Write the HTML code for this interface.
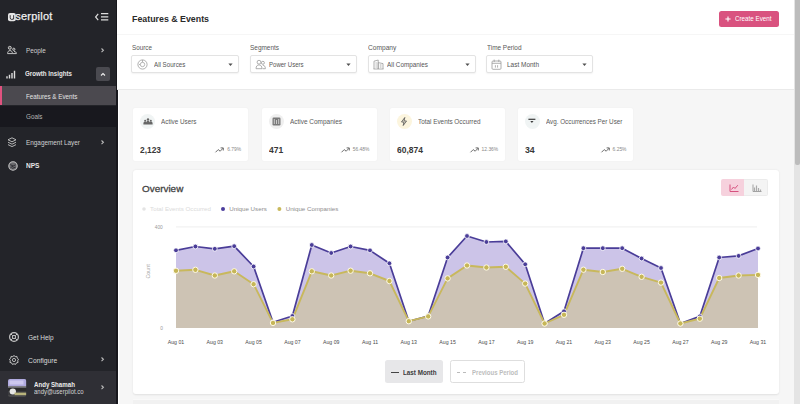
<!DOCTYPE html>
<html><head><meta charset="utf-8">
<style>
*{box-sizing:border-box;margin:0;padding:0}
html,body{width:800px;height:404px;overflow:hidden;background:#f6f6f6;font-family:"Liberation Sans",sans-serif;position:relative}
.a{position:absolute;white-space:nowrap;line-height:1}
svg.a{overflow:visible}
</style></head><body>
<div class="a" style="left:0px;top:0px;width:117px;height:404px;background:#232429;"></div>
<svg class="a" style="left:7.6px;top:12.8px" width="8" height="8.4" viewBox="0 0 8 8.4"><rect x="0" y="0" width="7.8" height="8.3" rx="2" fill="#e6e6e6"/><path d="M2.2 2.2V4.8a1.7 1.7 0 0 0 3.4 0V2.2M5.6 4.5V6.4" stroke="#3a3a40" stroke-width="1" fill="none"/></svg>
<div class="a" id="t1" style="left:15.2px;top:10.59px;font-size:11px;font-weight:400;color:#f0f0f0;letter-spacing:0.25px;-webkit-text-stroke:0.25px #f0f0f0">serpilot</div>
<svg class="a" style="left:94px;top:12px" width="15" height="10" viewBox="0 0 15 10"><path d="M4.2 1.8 L1.6 5 L4.2 8.2" stroke="#ddd" stroke-width="1.2" fill="none"/><path d="M7 1.6h7.3M7 4.8h7.3M7 7.9h7.3" stroke="#ddd" stroke-width="1.3"/></svg>
<svg class="a" style="left:7px;top:45px" width="10" height="10" viewBox="0 0 10 10"><circle cx="2.8" cy="2.8" r="1.5" stroke="#c4c4c4" stroke-width="1" fill="#555"/><circle cx="6.8" cy="4.3" r="1.15" stroke="#c4c4c4" stroke-width="1" fill="#555"/><path d="M0.6 8.6C0.6 6.6 1.5 5.6 3 5.6S5.4 6.6 5.4 8.6ZM5.4 8.6H9.4C9.4 7.2 8.5 6.5 7 6.5" stroke="#c4c4c4" stroke-width="1" fill="none" stroke-linejoin="round"/></svg>
<div class="a" id="t2" style="left:26.1px;top:46.97px;font-size:7px;font-weight:400;color:#d0d0d0;letter-spacing:0px;transform:scaleX(0.9084);transform-origin:0 0;">People</div>
<svg class="a" style="left:100px;top:47.2px" width="5" height="7" viewBox="0 0 5 7"><path d="M1.5 1.5L3.4 3.3L1.5 5.1" stroke="#b8b8b8" stroke-width="1.15" fill="none"/></svg>
<svg class="a" style="left:6px;top:69.5px" width="10" height="9" viewBox="0 0 10 9"><path d="M1 8.5V6.2M3.5 8.5V4.8M6 8.5V3M8.5 8.5V0.8" stroke="#ddd" stroke-width="1.4"/></svg>
<div class="a" id="t3" style="left:24.6px;top:71.26px;font-size:6.9px;font-weight:700;color:#e6e6e6;letter-spacing:0px;transform:scaleX(0.8960);transform-origin:0 0;">Growth Insights</div>
<div class="a" style="left:95.6px;top:67px;width:14px;height:13.8px;background:#4a4a50;border-radius:2px"></div>
<svg class="a" style="left:99.6px;top:71.5px" width="6" height="5" viewBox="0 0 6 5"><path d="M1 3.5L3 1.5L5 3.5" stroke="#eee" stroke-width="1.1" fill="none"/></svg>
<div class="a" style="left:0px;top:86.3px;width:117px;height:19.2px;background:#4b494f;"></div>
<div class="a" style="left:0px;top:86.3px;width:1.8px;height:19.2px;background:#e0527f;"></div>
<div class="a" id="t4" style="left:25.8px;top:93.27px;font-size:7px;font-weight:400;color:#e4e4e4;letter-spacing:0px;transform:scaleX(0.8907);transform-origin:0 0;">Features &amp; Events</div>
<div class="a" style="left:0px;top:105.5px;width:117px;height:21.3px;background:#18181e;"></div>
<div class="a" id="t5" style="left:26px;top:113.17px;font-size:7px;font-weight:400;color:#b4b4b4;letter-spacing:0px;transform:scaleX(0.9018);transform-origin:0 0;">Goals</div>
<svg class="a" style="left:7px;top:137.1px" width="10" height="11" viewBox="0 0 10 11"><path d="M5 0.8L9 2.8L5 4.8L1 2.8Z" stroke="#c4c4c4" stroke-width=".9" fill="none"/><path d="M1 5.2L5 7.2L9 5.2M1 7.6L5 9.6L9 7.6" stroke="#c4c4c4" stroke-width=".9" fill="none"/></svg>
<div class="a" id="t6" style="left:26px;top:138.97px;font-size:7px;font-weight:400;color:#d0d0d0;letter-spacing:0px;transform:scaleX(0.9111);transform-origin:0 0;">Engagement Layer</div>
<svg class="a" style="left:100px;top:139.2px" width="5" height="7" viewBox="0 0 5 7"><path d="M1.5 1.5L3.4 3.3L1.5 5.1" stroke="#b8b8b8" stroke-width="1.15" fill="none"/></svg>
<svg class="a" style="left:7.6px;top:160.6px" width="10" height="10" viewBox="0 0 10 10"><circle cx="5" cy="5" r="4.2" stroke="#c4c4c4" stroke-width="1.1" fill="#6a6a6e"/><path d="M2.2 3.6L5.2 5L2.6 6.6M5.2 5L7.6 3.8M4.2 7.4L7.6 6.2" stroke="#2a2a30" stroke-width="0.9" fill="none"/></svg>
<div class="a" id="t7" style="left:26px;top:162.07px;font-size:7px;font-weight:700;color:#e6e6e6;letter-spacing:0px;transform:scaleX(0.9371);transform-origin:0 0;">NPS</div>
<svg class="a" style="left:8.5px;top:331.8px" width="10" height="10" viewBox="0 0 10 10"><circle cx="5" cy="5" r="4.4" stroke="#c4c4c4" stroke-width="1.2" fill="none"/><circle cx="5" cy="5" r="1.6" stroke="#c4c4c4" stroke-width="1" fill="none"/><path d="M2 2L3.8 3.8M8 2L6.2 3.8M2 8L3.8 6.2M8 8L6.2 6.2" stroke="#c4c4c4" stroke-width="1"/></svg>
<div class="a" id="t8" style="left:27.5px;top:334.17px;font-size:7px;font-weight:400;color:#dadada;letter-spacing:0px;transform:scaleX(0.9267);transform-origin:0 0;">Get Help</div>
<svg class="a" style="left:8.9px;top:354.5px" width="10" height="10" viewBox="0 0 10 10"><path d="M5 0.5L6.2 1.6L7.9 1.4L8.2 3.1L9.5 4.2L8.7 5.7L9.1 7.4L7.4 7.9L6.6 9.4L5 8.8L3.4 9.4L2.6 7.9L0.9 7.4L1.3 5.7L0.5 4.2L1.8 3.1L2.1 1.4L3.8 1.6Z" stroke="#c4c4c4" stroke-width="1" fill="none" stroke-linejoin="round"/><circle cx="5" cy="5" r="1.6" stroke="#c4c4c4" stroke-width=".9" fill="none"/></svg>
<div class="a" id="t9" style="left:27.8px;top:356.77px;font-size:7px;font-weight:400;color:#dadada;letter-spacing:0px;transform:scaleX(0.9651);transform-origin:0 0;">Configure</div>
<svg class="a" style="left:100px;top:356.2px" width="5" height="7" viewBox="0 0 5 7"><path d="M1.5 1.5L3.4 3.3L1.5 5.1" stroke="#b8b8b8" stroke-width="1.15" fill="none"/></svg>
<div class="a" style="left:0px;top:371.2px;width:117px;height:32.8px;background:#2f2f35;"></div>
<svg class="a" style="left:7.9px;top:378.8px" width="18.4" height="17.8" viewBox="0 0 18.4 17.8"><defs><clipPath id="av"><rect width="18.4" height="17.8" rx="2"/></clipPath></defs><g clip-path="url(#av)"><rect width="18.4" height="17.8" fill="#3a3a3e"/><rect width="18.4" height="7.2" fill="#b0aadf"/><rect x="1.5" y="1.5" width="14" height="4" fill="#cdc8ee"/><rect y="7.2" width="18.4" height="1.6" fill="#8a8a90"/><rect y="8.8" width="18.4" height="3" fill="#2a2a2a"/><ellipse cx="4.8" cy="12.6" rx="3.2" ry="3" fill="#e6e6e6"/><rect x="6.5" y="13.6" width="11.9" height="2.8" fill="#b9b47c"/><rect y="16.4" width="18.4" height="1.4" fill="#555"/></g></svg>
<div class="a" id="t10" style="left:33.5px;top:380.97px;font-size:7px;font-weight:700;color:#ececec;letter-spacing:0px;transform:scaleX(0.8760);transform-origin:0 0;">Andy Shamah</div>
<div class="a" id="t11" style="left:33.5px;top:389.03px;font-size:6.7px;font-weight:400;color:#d4d4d4;letter-spacing:0px;transform:scaleX(0.8937);transform-origin:0 0;">andy@userpilot.co</div>
<svg class="a" style="left:99.5px;top:384.2px" width="5" height="7" viewBox="0 0 5 7"><path d="M1.5 1.5L3.4 3.3L1.5 5.1" stroke="#b8b8b8" stroke-width="1.15" fill="none"/></svg>
<div class="a" style="left:116.2px;top:0px;width:1.4px;height:404px;background:#17171c;"></div>
<div class="a" style="left:117.6px;top:90px;width:1.8px;height:314px;background:#fff;"></div>
<div class="a" style="left:117px;top:0px;width:677px;height:34px;background:#fff;"></div>
<div class="a" id="t12" style="left:132.3px;top:14.22px;font-size:9.9px;font-weight:700;color:#2a2a2a;letter-spacing:0px;transform:scaleX(0.8936);transform-origin:0 0;">Features &amp; Events</div>
<div class="a" style="left:719.4px;top:11.2px;width:59.4px;height:15.8px;background:#d9527f;border-radius:2.5px"></div>
<svg class="a" style="left:724.5px;top:16.3px" width="6" height="6" viewBox="0 0 6 6"><path d="M3 0.4V5.6M0.4 3H5.6" stroke="#fff" stroke-width="1.1"/></svg>
<div class="a" id="t13" style="left:735.2px;top:16.29px;font-size:7.1px;font-weight:400;color:#fff;letter-spacing:0px;transform:scaleX(0.8815);transform-origin:0 0;">Create Event</div>
<div class="a" style="left:117px;top:34px;width:677px;height:56px;background:#fff;border-bottom:1px solid #eaeaea"></div>
<div class="a" style="left:117px;top:33.6px;width:677px;height:1.8px;background:#f6f6f6;"></div>
<div class="a" id="t14" style="left:132.3px;top:45.46px;font-size:6.9px;font-weight:400;color:#585858;letter-spacing:0px;transform:scaleX(0.9156);transform-origin:0 0;">Source</div>
<div class="a" id="t15" style="left:250.2px;top:45.46px;font-size:6.9px;font-weight:400;color:#585858;letter-spacing:0px;transform:scaleX(0.9345);transform-origin:0 0;">Segments</div>
<div class="a" id="t16" style="left:368.2px;top:45.46px;font-size:6.9px;font-weight:400;color:#585858;letter-spacing:0px;transform:scaleX(0.9593);transform-origin:0 0;">Company</div>
<div class="a" id="t17" style="left:487.2px;top:45.46px;font-size:6.9px;font-weight:400;color:#585858;letter-spacing:0px;transform:scaleX(0.9352);transform-origin:0 0;">Time Period</div>
<div class="a" style="left:131.2px;top:55.2px;width:107.6px;height:17.6px;background:#fff;border:1px solid #e3e3e3;border-radius:2px;box-shadow:0 1px 1.5px rgba(0,0,0,.05)"></div>
<svg class="a" style="left:227.79999999999998px;top:62.7px" width="5" height="4" viewBox="0 0 5 4"><path d="M0.4 0.5H4.6L2.5 3.1Z" fill="#505050"/></svg>
<div class="a" style="left:249.9px;top:55.2px;width:107.4px;height:17.6px;background:#fff;border:1px solid #e3e3e3;border-radius:2px;box-shadow:0 1px 1.5px rgba(0,0,0,.05)"></div>
<svg class="a" style="left:346.3px;top:62.7px" width="5" height="4" viewBox="0 0 5 4"><path d="M0.4 0.5H4.6L2.5 3.1Z" fill="#505050"/></svg>
<div class="a" style="left:368px;top:55.2px;width:107.6px;height:17.6px;background:#fff;border:1px solid #e3e3e3;border-radius:2px;box-shadow:0 1px 1.5px rgba(0,0,0,.05)"></div>
<svg class="a" style="left:464.6px;top:62.7px" width="5" height="4" viewBox="0 0 5 4"><path d="M0.4 0.5H4.6L2.5 3.1Z" fill="#505050"/></svg>
<div class="a" style="left:486.4px;top:55.2px;width:107.0px;height:17.6px;background:#fff;border:1px solid #e3e3e3;border-radius:2px;box-shadow:0 1px 1.5px rgba(0,0,0,.05)"></div>
<svg class="a" style="left:582.4px;top:62.7px" width="5" height="4" viewBox="0 0 5 4"><path d="M0.4 0.5H4.6L2.5 3.1Z" fill="#505050"/></svg>
<svg class="a" style="left:136.8px;top:58.8px" width="11" height="11" viewBox="0 0 11 11"><circle cx="5.5" cy="5.5" r="4.6" stroke="#9a9a9a" stroke-width=".8" fill="none"/><circle cx="5.5" cy="5.5" r="2.2" stroke="#9a9a9a" stroke-width=".7" fill="none"/><path d="M5.5 1V3.3M2 5.5H3.3" stroke="#9a9a9a" stroke-width=".7"/></svg>
<div class="a" id="t18" style="left:154px;top:60.92px;font-size:7px;font-weight:400;color:#555;letter-spacing:0px;transform:scaleX(0.8840);transform-origin:0 0;">All Sources</div>
<svg class="a" style="left:255px;top:58.6px" width="11" height="11" viewBox="0 0 11 11"><circle cx="4" cy="3.2" r="1.9" stroke="#9a9a9a" stroke-width=".8" fill="none"/><circle cx="7.9" cy="3.8" r="1.5" stroke="#9a9a9a" stroke-width=".8" fill="none"/><path d="M1 9.7c0-2.5 1.3-3.8 3-3.8s3 1.3 3 3.8zM7.6 9.7h2.8c0-2.1-.9-3.4-2.6-3.4" stroke="#9a9a9a" stroke-width=".8" fill="none"/></svg>
<div class="a" id="t19" style="left:269.2px;top:60.92px;font-size:7px;font-weight:400;color:#555;letter-spacing:0px;transform:scaleX(0.8633);transform-origin:0 0;">Power Users</div>
<svg class="a" style="left:372.8px;top:58.8px" width="11" height="11" viewBox="0 0 11 11"><path d="M1 10V2.2L5.2 1V10M5.2 10V3.6L10 4.6V10M0.5 10H10.5M2.5 4H3.8M2.5 6H3.8M2.5 8H3.8M6.8 6H8.5M6.8 8H8.5" stroke="#9a9a9a" stroke-width=".8" fill="none"/></svg>
<div class="a" id="t20" style="left:387.4px;top:60.92px;font-size:7px;font-weight:400;color:#555;letter-spacing:0px;transform:scaleX(0.9061);transform-origin:0 0;">All Companies</div>
<svg class="a" style="left:491.2px;top:58.8px" width="11" height="11" viewBox="0 0 11 11"><rect x="1" y="2" width="9" height="8.3" rx="1" stroke="#9a9a9a" stroke-width=".8" fill="none"/><path d="M1 4.3H10M3.2 0.6V3M7.8 0.6V3M4.4 6.2V8.6M6.6 6.2V8.6" stroke="#9a9a9a" stroke-width=".8"/></svg>
<div class="a" id="t21" style="left:507px;top:60.92px;font-size:7px;font-weight:400;color:#555;letter-spacing:0px;transform:scaleX(0.9238);transform-origin:0 0;">Last Month</div>
<div class="a" style="left:133px;top:108.2px;width:115px;height:53.1px;background:#fff;border-radius:2px;box-shadow:0 0 1.5px rgba(0,0,0,.06)"></div>
<div class="a" style="left:140px;top:114px;width:15px;height:15px;background:#f0f4f4;border-radius:50%"></div>
<div class="a" id="t22" style="left:161px;top:118.71px;font-size:6.6px;font-weight:400;color:#5a5a5a;letter-spacing:0px;transform:scaleX(0.9591);transform-origin:0 0;">Active Users</div>
<div class="a" id="t23" style="left:140.2px;top:145.74px;font-size:8.7px;font-weight:700;color:#383838;letter-spacing:0px;transform:scaleX(0.9655);transform-origin:0 0;">2,123</div>
<svg class="a" style="left:215.1px;top:147px" width="9" height="6" viewBox="0 0 9 6"><path d="M0.5 5.3L3.2 2.6L5.2 4.2L8.2 1.1M5.6 0.9H8.3V3.5" stroke="#666" stroke-width=".95" fill="none"/></svg>
<div class="a" id="t24" style="left:227.2px;top:148.25px;font-size:4.9px;font-weight:400;color:#888;letter-spacing:0px;">6.79%</div>
<div class="a" style="left:262px;top:108.2px;width:115px;height:53.1px;background:#fff;border-radius:2px;box-shadow:0 0 1.5px rgba(0,0,0,.06)"></div>
<div class="a" style="left:269px;top:114px;width:15px;height:15px;background:#efefef;border-radius:50%"></div>
<div class="a" id="t25" style="left:290px;top:118.71px;font-size:6.6px;font-weight:400;color:#5a5a5a;letter-spacing:0px;transform:scaleX(0.9785);transform-origin:0 0;">Active Companies</div>
<div class="a" id="t26" style="left:269.2px;top:145.74px;font-size:8.7px;font-weight:700;color:#383838;letter-spacing:0px;transform:scaleX(0.9793);transform-origin:0 0;">471</div>
<svg class="a" style="left:340.7px;top:147px" width="9" height="6" viewBox="0 0 9 6"><path d="M0.5 5.3L3.2 2.6L5.2 4.2L8.2 1.1M5.6 0.9H8.3V3.5" stroke="#666" stroke-width=".95" fill="none"/></svg>
<div class="a" id="t27" style="left:352.8px;top:148.25px;font-size:4.9px;font-weight:400;color:#888;letter-spacing:0px;">56.48%</div>
<div class="a" style="left:390px;top:108.2px;width:115px;height:53.1px;background:#fff;border-radius:2px;box-shadow:0 0 1.5px rgba(0,0,0,.06)"></div>
<div class="a" style="left:397px;top:114px;width:15px;height:15px;background:#fcf5de;border-radius:50%"></div>
<div class="a" id="t28" style="left:418px;top:118.71px;font-size:6.6px;font-weight:400;color:#5a5a5a;letter-spacing:0px;transform:scaleX(0.9634);transform-origin:0 0;">Total Events Occurred</div>
<div class="a" id="t29" style="left:397.2px;top:145.74px;font-size:8.7px;font-weight:700;color:#383838;letter-spacing:0px;transform:scaleX(0.9745);transform-origin:0 0;">60,874</div>
<svg class="a" style="left:469.5px;top:147px" width="9" height="6" viewBox="0 0 9 6"><path d="M0.5 5.3L3.2 2.6L5.2 4.2L8.2 1.1M5.6 0.9H8.3V3.5" stroke="#666" stroke-width=".95" fill="none"/></svg>
<div class="a" id="t30" style="left:481.6px;top:148.25px;font-size:4.9px;font-weight:400;color:#888;letter-spacing:0px;">12.36%</div>
<div class="a" style="left:518.2px;top:108.2px;width:115px;height:53.1px;background:#fff;border-radius:2px;box-shadow:0 0 1.5px rgba(0,0,0,.06)"></div>
<div class="a" style="left:525.2px;top:114px;width:15px;height:15px;background:#f0f4f4;border-radius:50%"></div>
<div class="a" id="t31" style="left:546.2px;top:118.71px;font-size:6.6px;font-weight:400;color:#5a5a5a;letter-spacing:0px;transform:scaleX(0.9533);transform-origin:0 0;">Avg. Occurrences Per User</div>
<div class="a" id="t32" style="left:525.4000000000001px;top:145.74px;font-size:8.7px;font-weight:700;color:#383838;letter-spacing:0px;transform:scaleX(1.0029);transform-origin:0 0;">34</div>
<svg class="a" style="left:600.5px;top:147px" width="9" height="6" viewBox="0 0 9 6"><path d="M0.5 5.3L3.2 2.6L5.2 4.2L8.2 1.1M5.6 0.9H8.3V3.5" stroke="#666" stroke-width=".95" fill="none"/></svg>
<div class="a" id="t33" style="left:612.6px;top:148.25px;font-size:4.9px;font-weight:400;color:#888;letter-spacing:0px;">6.25%</div>
<svg class="a" style="left:142.5px;top:117.6px" width="10" height="7" viewBox="0 0 10 7"><circle cx="5" cy="1.5" r="1.2" fill="#666"/><circle cx="2.2" cy="2.7" r="1.05" fill="#666"/><circle cx="7.8" cy="2.7" r="1.05" fill="#666"/><path d="M0.4 6.6V5.2a1.6 1.6 0 0 1 3.2 0v1.4zM6.4 6.6V5.2a1.6 1.6 0 0 1 3.2 0v1.4zM3.3 6.6V4.4a1.7 1.7 0 0 1 3.4 0v2.2z" fill="#666"/></svg>
<svg class="a" style="left:272px;top:117px" width="9" height="9" viewBox="0 0 9 9"><rect x="0.5" y="0.5" width="8" height="8" rx="1.2" fill="#7a7a7a"/><path d="M2.3 2V7M4.5 3V7M6.7 2V7" stroke="#eee" stroke-width=".7"/></svg>
<svg class="a" style="left:400px;top:117px" width="8" height="9" viewBox="0 0 8 9"><path d="M4.8 0.5L1.5 5H4L3.2 8.5L6.5 4H4Z" stroke="#555" stroke-width=".85" fill="none"/></svg>
<svg class="a" style="left:528.4px;top:118.3px" width="8" height="7" viewBox="0 0 8 7"><path d="M0.4 1.3H7.4" stroke="#3a3a3a" stroke-width="1.2"/><path d="M2.3 3H5.5L3.9 4.9Z" fill="#3a3a3a"/></svg>
<div class="a" style="left:133px;top:170px;width:646px;height:224px;background:#fff;border-radius:3px;box-shadow:0 0.5px 2px rgba(0,0,0,.09)"></div>
<div class="a" id="t34" style="left:142px;top:183.60px;font-size:9.8px;font-weight:400;color:#444;letter-spacing:0px;transform:scaleX(1.0112);transform-origin:0 0;-webkit-text-stroke:0.3px #444">Overview</div>
<div class="a" style="left:721.4px;top:179.4px;width:22.7px;height:16.2px;background:#f6d1dd;border-radius:2px 0 0 2px"></div>
<div class="a" style="left:744.1px;top:179.4px;width:24.1px;height:16.2px;background:#f4f4f4;border:1px solid #ebebeb;border-left:0;border-radius:0 2px 2px 0"></div>
<svg class="a" style="left:728.5px;top:183.5px" width="10" height="8" viewBox="0 0 10 8"><path d="M1 0.5V7.5H9.5" stroke="#d6517f" stroke-width="1" fill="none"/><path d="M2.5 5.5L4.5 3L6 4.5L8.8 1.2" stroke="#d6517f" stroke-width="1" fill="none"/></svg>
<svg class="a" style="left:752px;top:183.5px" width="10" height="8" viewBox="0 0 10 8"><path d="M1 0.5V7.5H9.5" stroke="#999" stroke-width=".9" fill="none"/><path d="M2.5 7V3.5M4.5 7V1.5M6.5 7V4M8.5 7V5.5" stroke="#aaa" stroke-width="1.2"/></svg>
<svg class="a" style="left:0;top:0" width="800" height="404"><line x1="176" y1="226.9" x2="757" y2="226.9" stroke="#ebebeb" stroke-width="0.8"/><polygon points="176,328 176.0,250.3 195.4,246.5 214.8,248.8 234.2,246.2 253.6,266.5 273.0,322.2 292.4,316.0 311.8,245.0 331.2,253.0 350.6,246.5 370.0,250.4 389.4,263.3 408.8,321.2 428.2,316.0 447.6,257.5 467.0,236.0 486.4,242.0 505.8,241.4 525.2,264.3 544.6,323.5 564.0,311.3 583.4,248.2 602.8,248.2 622.2,248.2 641.6,258.5 661.0,268.0 680.4,323.5 699.8,316.4 719.2,257.5 738.6,255.9 758.0,248.5 758.0,328" fill="#ccc4e8"/><polygon points="176,328 176.0,270.8 195.4,269.8 214.8,275.5 234.2,271.3 253.6,284.2 273.0,322.9 292.4,319.3 311.8,271.3 331.2,275.5 350.6,270.7 370.0,273.3 389.4,281.0 408.8,321.2 428.2,316.4 447.6,278.4 467.0,265.5 486.4,267.5 505.8,266.8 525.2,283.6 544.6,323.5 564.0,314.8 583.4,269.7 602.8,272.0 622.2,268.8 641.6,276.8 661.0,282.6 680.4,323.5 699.8,318.7 719.2,278.0 738.6,275.5 758.0,274.9 758.0,328" fill="#cdc3b4"/><polyline points="176.0,250.3 195.4,246.5 214.8,248.8 234.2,246.2 253.6,266.5 273.0,322.2 292.4,316.0 311.8,245.0 331.2,253.0 350.6,246.5 370.0,250.4 389.4,263.3 408.8,321.2 428.2,316.0 447.6,257.5 467.0,236.0 486.4,242.0 505.8,241.4 525.2,264.3 544.6,323.5 564.0,311.3 583.4,248.2 602.8,248.2 622.2,248.2 641.6,258.5 661.0,268.0 680.4,323.5 699.8,316.4 719.2,257.5 738.6,255.9 758.0,248.5" fill="none" stroke="#4a3d98" stroke-width="1.7" stroke-linejoin="round"/><polyline points="176.0,270.8 195.4,269.8 214.8,275.5 234.2,271.3 253.6,284.2 273.0,322.9 292.4,319.3 311.8,271.3 331.2,275.5 350.6,270.7 370.0,273.3 389.4,281.0 408.8,321.2 428.2,316.4 447.6,278.4 467.0,265.5 486.4,267.5 505.8,266.8 525.2,283.6 544.6,323.5 564.0,314.8 583.4,269.7 602.8,272.0 622.2,268.8 641.6,276.8 661.0,282.6 680.4,323.5 699.8,318.7 719.2,278.0 738.6,275.5 758.0,274.9" fill="none" stroke="#c8b85c" stroke-width="1.9" stroke-linejoin="round"/><circle cx="176.0" cy="250.3" r="2.4" fill="#4a3d98" stroke="#fff" stroke-width="0.8"/><circle cx="195.4" cy="246.5" r="2.4" fill="#4a3d98" stroke="#fff" stroke-width="0.8"/><circle cx="214.8" cy="248.8" r="2.4" fill="#4a3d98" stroke="#fff" stroke-width="0.8"/><circle cx="234.2" cy="246.2" r="2.4" fill="#4a3d98" stroke="#fff" stroke-width="0.8"/><circle cx="253.6" cy="266.5" r="2.4" fill="#4a3d98" stroke="#fff" stroke-width="0.8"/><circle cx="273.0" cy="322.2" r="2.4" fill="#4a3d98" stroke="#fff" stroke-width="0.8"/><circle cx="292.4" cy="316.0" r="2.4" fill="#4a3d98" stroke="#fff" stroke-width="0.8"/><circle cx="311.8" cy="245.0" r="2.4" fill="#4a3d98" stroke="#fff" stroke-width="0.8"/><circle cx="331.2" cy="253.0" r="2.4" fill="#4a3d98" stroke="#fff" stroke-width="0.8"/><circle cx="350.6" cy="246.5" r="2.4" fill="#4a3d98" stroke="#fff" stroke-width="0.8"/><circle cx="370.0" cy="250.4" r="2.4" fill="#4a3d98" stroke="#fff" stroke-width="0.8"/><circle cx="389.4" cy="263.3" r="2.4" fill="#4a3d98" stroke="#fff" stroke-width="0.8"/><circle cx="408.8" cy="321.2" r="2.4" fill="#4a3d98" stroke="#fff" stroke-width="0.8"/><circle cx="428.2" cy="316.0" r="2.4" fill="#4a3d98" stroke="#fff" stroke-width="0.8"/><circle cx="447.6" cy="257.5" r="2.4" fill="#4a3d98" stroke="#fff" stroke-width="0.8"/><circle cx="467.0" cy="236.0" r="2.4" fill="#4a3d98" stroke="#fff" stroke-width="0.8"/><circle cx="486.4" cy="242.0" r="2.4" fill="#4a3d98" stroke="#fff" stroke-width="0.8"/><circle cx="505.8" cy="241.4" r="2.4" fill="#4a3d98" stroke="#fff" stroke-width="0.8"/><circle cx="525.2" cy="264.3" r="2.4" fill="#4a3d98" stroke="#fff" stroke-width="0.8"/><circle cx="544.6" cy="323.5" r="2.4" fill="#4a3d98" stroke="#fff" stroke-width="0.8"/><circle cx="564.0" cy="311.3" r="2.4" fill="#4a3d98" stroke="#fff" stroke-width="0.8"/><circle cx="583.4" cy="248.2" r="2.4" fill="#4a3d98" stroke="#fff" stroke-width="0.8"/><circle cx="602.8" cy="248.2" r="2.4" fill="#4a3d98" stroke="#fff" stroke-width="0.8"/><circle cx="622.2" cy="248.2" r="2.4" fill="#4a3d98" stroke="#fff" stroke-width="0.8"/><circle cx="641.6" cy="258.5" r="2.4" fill="#4a3d98" stroke="#fff" stroke-width="0.8"/><circle cx="661.0" cy="268.0" r="2.4" fill="#4a3d98" stroke="#fff" stroke-width="0.8"/><circle cx="680.4" cy="323.5" r="2.4" fill="#4a3d98" stroke="#fff" stroke-width="0.8"/><circle cx="699.8" cy="316.4" r="2.4" fill="#4a3d98" stroke="#fff" stroke-width="0.8"/><circle cx="719.2" cy="257.5" r="2.4" fill="#4a3d98" stroke="#fff" stroke-width="0.8"/><circle cx="738.6" cy="255.9" r="2.4" fill="#4a3d98" stroke="#fff" stroke-width="0.8"/><circle cx="758.0" cy="248.5" r="2.4" fill="#4a3d98" stroke="#fff" stroke-width="0.8"/><circle cx="176.0" cy="270.8" r="2.7" fill="#c6b658" stroke="#fffbe8" stroke-width="1"/><circle cx="195.4" cy="269.8" r="2.7" fill="#c6b658" stroke="#fffbe8" stroke-width="1"/><circle cx="214.8" cy="275.5" r="2.7" fill="#c6b658" stroke="#fffbe8" stroke-width="1"/><circle cx="234.2" cy="271.3" r="2.7" fill="#c6b658" stroke="#fffbe8" stroke-width="1"/><circle cx="253.6" cy="284.2" r="2.7" fill="#c6b658" stroke="#fffbe8" stroke-width="1"/><circle cx="273.0" cy="322.9" r="2.7" fill="#c6b658" stroke="#fffbe8" stroke-width="1"/><circle cx="292.4" cy="319.3" r="2.7" fill="#c6b658" stroke="#fffbe8" stroke-width="1"/><circle cx="311.8" cy="271.3" r="2.7" fill="#c6b658" stroke="#fffbe8" stroke-width="1"/><circle cx="331.2" cy="275.5" r="2.7" fill="#c6b658" stroke="#fffbe8" stroke-width="1"/><circle cx="350.6" cy="270.7" r="2.7" fill="#c6b658" stroke="#fffbe8" stroke-width="1"/><circle cx="370.0" cy="273.3" r="2.7" fill="#c6b658" stroke="#fffbe8" stroke-width="1"/><circle cx="389.4" cy="281.0" r="2.7" fill="#c6b658" stroke="#fffbe8" stroke-width="1"/><circle cx="408.8" cy="321.2" r="2.7" fill="#c6b658" stroke="#fffbe8" stroke-width="1"/><circle cx="428.2" cy="316.4" r="2.7" fill="#c6b658" stroke="#fffbe8" stroke-width="1"/><circle cx="447.6" cy="278.4" r="2.7" fill="#c6b658" stroke="#fffbe8" stroke-width="1"/><circle cx="467.0" cy="265.5" r="2.7" fill="#c6b658" stroke="#fffbe8" stroke-width="1"/><circle cx="486.4" cy="267.5" r="2.7" fill="#c6b658" stroke="#fffbe8" stroke-width="1"/><circle cx="505.8" cy="266.8" r="2.7" fill="#c6b658" stroke="#fffbe8" stroke-width="1"/><circle cx="525.2" cy="283.6" r="2.7" fill="#c6b658" stroke="#fffbe8" stroke-width="1"/><circle cx="544.6" cy="323.5" r="2.7" fill="#c6b658" stroke="#fffbe8" stroke-width="1"/><circle cx="564.0" cy="314.8" r="2.7" fill="#c6b658" stroke="#fffbe8" stroke-width="1"/><circle cx="583.4" cy="269.7" r="2.7" fill="#c6b658" stroke="#fffbe8" stroke-width="1"/><circle cx="602.8" cy="272.0" r="2.7" fill="#c6b658" stroke="#fffbe8" stroke-width="1"/><circle cx="622.2" cy="268.8" r="2.7" fill="#c6b658" stroke="#fffbe8" stroke-width="1"/><circle cx="641.6" cy="276.8" r="2.7" fill="#c6b658" stroke="#fffbe8" stroke-width="1"/><circle cx="661.0" cy="282.6" r="2.7" fill="#c6b658" stroke="#fffbe8" stroke-width="1"/><circle cx="680.4" cy="323.5" r="2.7" fill="#c6b658" stroke="#fffbe8" stroke-width="1"/><circle cx="699.8" cy="318.7" r="2.7" fill="#c6b658" stroke="#fffbe8" stroke-width="1"/><circle cx="719.2" cy="278.0" r="2.7" fill="#c6b658" stroke="#fffbe8" stroke-width="1"/><circle cx="738.6" cy="275.5" r="2.7" fill="#c6b658" stroke="#fffbe8" stroke-width="1"/><circle cx="758.0" cy="274.9" r="2.7" fill="#c6b658" stroke="#fffbe8" stroke-width="1"/><text x="176.0" y="343.6" font-size="5.2" fill="#4a4a4a" text-anchor="middle" font-family="Liberation Sans">Aug 01</text><text x="214.8" y="343.6" font-size="5.2" fill="#4a4a4a" text-anchor="middle" font-family="Liberation Sans">Aug 03</text><text x="253.6" y="343.6" font-size="5.2" fill="#4a4a4a" text-anchor="middle" font-family="Liberation Sans">Aug 05</text><text x="292.4" y="343.6" font-size="5.2" fill="#4a4a4a" text-anchor="middle" font-family="Liberation Sans">Aug 07</text><text x="331.2" y="343.6" font-size="5.2" fill="#4a4a4a" text-anchor="middle" font-family="Liberation Sans">Aug 09</text><text x="370.0" y="343.6" font-size="5.2" fill="#4a4a4a" text-anchor="middle" font-family="Liberation Sans">Aug 11</text><text x="408.8" y="343.6" font-size="5.2" fill="#4a4a4a" text-anchor="middle" font-family="Liberation Sans">Aug 13</text><text x="447.6" y="343.6" font-size="5.2" fill="#4a4a4a" text-anchor="middle" font-family="Liberation Sans">Aug 15</text><text x="486.4" y="343.6" font-size="5.2" fill="#4a4a4a" text-anchor="middle" font-family="Liberation Sans">Aug 17</text><text x="525.2" y="343.6" font-size="5.2" fill="#4a4a4a" text-anchor="middle" font-family="Liberation Sans">Aug 19</text><text x="564.0" y="343.6" font-size="5.2" fill="#4a4a4a" text-anchor="middle" font-family="Liberation Sans">Aug 21</text><text x="602.8" y="343.6" font-size="5.2" fill="#4a4a4a" text-anchor="middle" font-family="Liberation Sans">Aug 23</text><text x="641.6" y="343.6" font-size="5.2" fill="#4a4a4a" text-anchor="middle" font-family="Liberation Sans">Aug 25</text><text x="680.4" y="343.6" font-size="5.2" fill="#4a4a4a" text-anchor="middle" font-family="Liberation Sans">Aug 27</text><text x="719.2" y="343.6" font-size="5.2" fill="#4a4a4a" text-anchor="middle" font-family="Liberation Sans">Aug 29</text><text x="758.0" y="343.6" font-size="5.2" fill="#4a4a4a" text-anchor="middle" font-family="Liberation Sans">Aug 31</text><text x="158.8" y="229.3" font-size="4.8" fill="#999" text-anchor="middle" font-family="Liberation Sans">400</text><text x="161.7" y="330.2" font-size="4.8" fill="#999" text-anchor="middle" font-family="Liberation Sans">0</text><text x="0" y="0" font-size="5.4" fill="#a8a8a8" text-anchor="middle" font-family="Liberation Sans" transform="translate(150.2 271.4) rotate(-90)">Count</text><circle cx="144" cy="209" r="1.8" fill="#e4e4e4"/><text x="150.1" y="211.2" font-size="6.2" fill="#dadada" font-family="Liberation Sans">Total Events Occurred</text><circle cx="223" cy="209" r="2" fill="#4b3d9c"/><text x="229.3" y="211.2" font-size="6.2" fill="#8e8e8e" font-family="Liberation Sans">Unique Users</text><circle cx="279.4" cy="209" r="2" fill="#c9b95c"/><text x="285.7" y="211.2" font-size="6.2" fill="#8e8e8e" font-family="Liberation Sans">Unique Companies</text></svg>
<div class="a" style="left:385px;top:360.4px;width:57.6px;height:23px;background:#e7e7e9;border-radius:2.5px"></div>
<div class="a" style="left:391px;top:371.9px;width:8px;height:1.5px;background:#444;"></div>
<div class="a" id="t35" style="left:403px;top:370.10px;font-size:6.5px;font-weight:700;color:#3a3a3a;letter-spacing:0px;transform:scaleX(0.9662);transform-origin:0 0;">Last Month</div>
<div class="a" style="left:450.4px;top:360.4px;width:75px;height:23px;background:#fff;border:1px solid #dedede;border-radius:2.5px"></div>
<div class="a" style="left:457px;top:372px;width:3px;height:1.1px;background:#bbb;"></div>
<div class="a" style="left:462.5px;top:372px;width:3px;height:1.1px;background:#bbb;"></div>
<div class="a" id="t36" style="left:472px;top:370.10px;font-size:6.5px;font-weight:700;color:#bdbdbd;letter-spacing:0px;transform:scaleX(0.9293);transform-origin:0 0;">Previous Period</div>
<div class="a" style="left:133px;top:398.5px;width:646px;height:1px;background:#f9f9f9;"></div>
<div class="a" style="left:133px;top:399.5px;width:646px;height:5px;background:#f1f1f1;"></div>
<div class="a" style="left:794px;top:0px;width:6px;height:404px;background:#e4e4e4;"></div>
<div class="a" style="left:795px;top:0px;width:5px;height:164.5px;background:#bcbcbc;border-radius:0 0 2px 2px"></div>
</body></html>
